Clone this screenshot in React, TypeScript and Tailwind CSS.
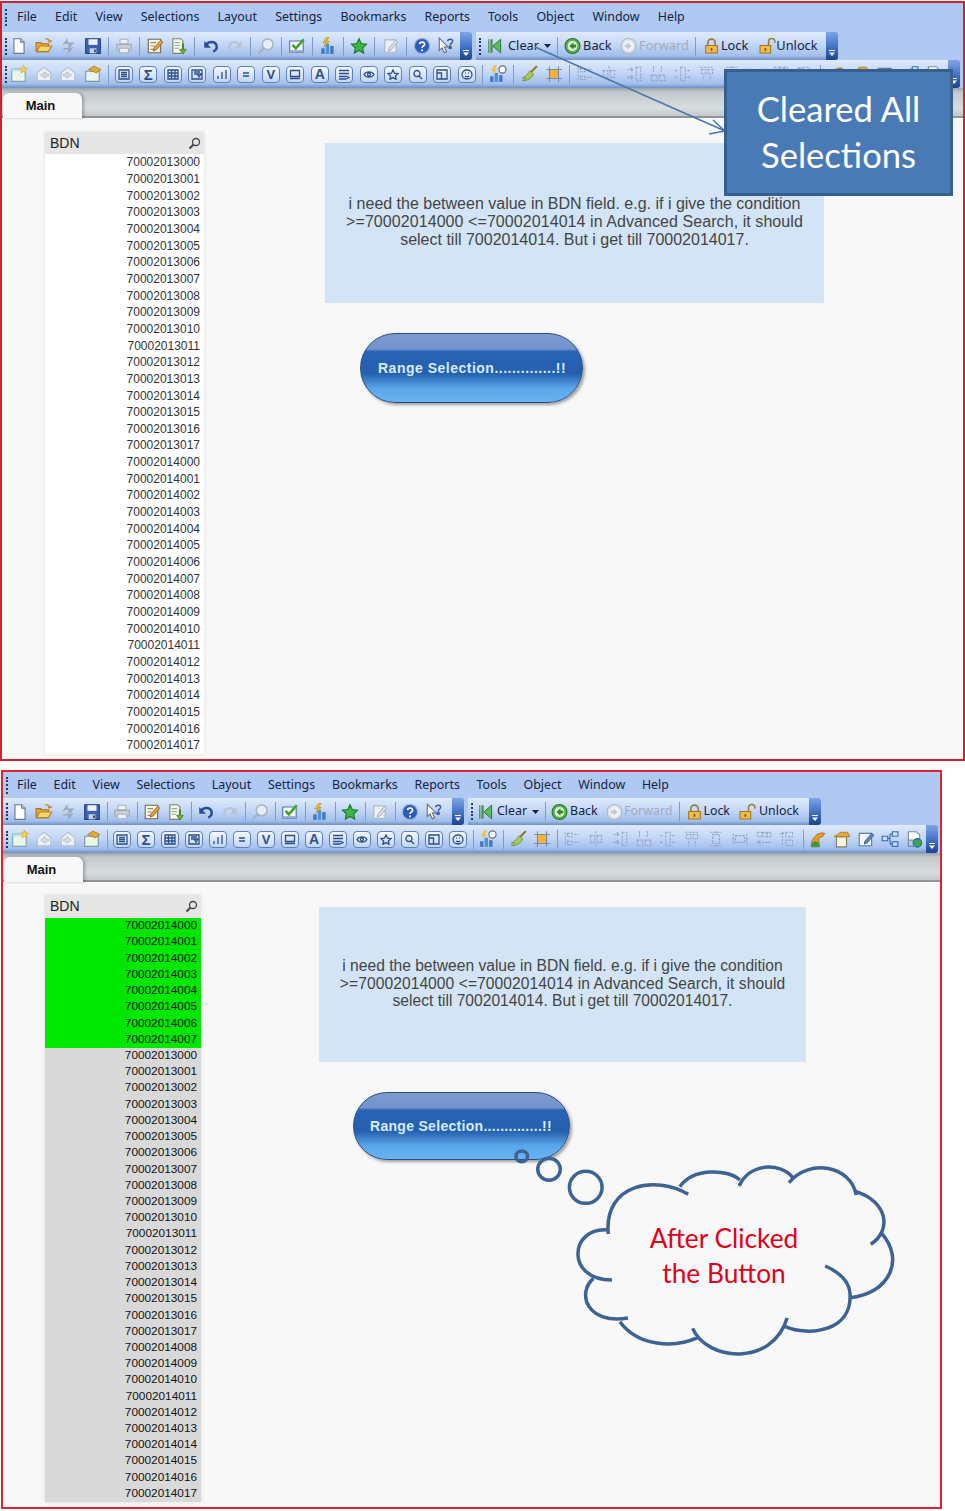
import React from "react";

const ui = "font-['Noto_Sans',sans-serif]";
const arial = "font-['Liberation_Sans',sans-serif]";

const top13 = [0, 1, 2, 3, 4, 5, 6, 7, 8, 9, 10, 11, 12, 13, 14, 15, 16, 17].map(
  (n) => "700020130" + String(n).padStart(2, "0")
);
const top14 = [0, 1, 2, 3, 4, 5, 6, 7, 8, 9, 10, 11, 12, 13, 14, 15, 16, 17].map(
  (n) => "700020140" + String(n).padStart(2, "0")
);

const S = ({ children }: { children: React.ReactNode }) => (
  <svg width="18" height="18" viewBox="0 0 16 16" fill="none">
    {children}
  </svg>
);

const Box = ({ children }: { children: React.ReactNode }) => (
  <div className="flex h-[17px] w-[18px] items-center justify-center rounded-[4px] border border-[#5f80b5] bg-[linear-gradient(#f4f8fe,#c3d5f2)] text-[#2d4f8a]">
    {children}
  </div>
);

const lines = (d: string) => (
  <Box>
    <svg width="12" height="11" viewBox="0 0 12 11" fill="none" stroke="currentColor" strokeWidth="1.3">
      <path d={d} />
    </svg>
  </Box>
);

const alignPaths = [
  "M2 2v12M4 3h4v3H4zM4 10h4v3H4zM10 4h4M10 11h4",
  "M8 1v3M8 12v3M3 5h4v6H3zM9 5h4v6H9z",
  "M10 2h4v12h-4zM2 4h5M2 11h5M5 2l2 2-2 2M5 9l2 2-2 2",
  "M4 1v6M11 1v6M2 9h5v5H2zM9 9h5v5H9z",
  "M6 2h4v12H6zM1 5h3M12 5h3M1 11h3M12 11h3",
  "M2 2h12M3 4h4v4H3zM9 4h4v4H9zM5 10v4M11 10v4",
  "M3 2h10M3 14h10M5 4h6v8H5zM8 1v2M8 13v2",
  "M2 3v10M14 3v10M4 5h8v6H4zM1 8h2M13 8h2",
  "M2 2h4v4H2zM7 2h3v4H7zM11 2h3v4h-3zM14 11H2M5 9l-3 2 3 2",
  "M6 2h6v4H6zM6 9h6v5H6zM3 2v12M1 4l2-2 2 2",
];

const icons: Record<string, React.ReactNode> = {
  new: <S><path d="M3.5 1.5h6l3 3v10h-9z" fill="#fff" stroke="#68798f" /><path d="M9.5 1.5v3h3" fill="#dfe6ef" stroke="#68798f" /></S>,
  open: <S><path d="M1 13V5h4l1 1h6v7z" fill="#e6a93a" stroke="#a8741a" /><path d="M1.5 13l2.5-5h11l-3 5z" fill="#f7d36f" stroke="#b58226" /><path d="M9 1.5c2.500 0 4 1 4.500 3M13.500 4.500l1.500-1.500M13.500 4.500l-2-.8" stroke="#c98a1c" strokeWidth="1.2" /></S>,
  refresh: <S><path d="M4 7l3-4v2.500h5L9 9V6.500M12 9l-3 4v-2.500H4" stroke="#9aa6b6" strokeWidth="1.4" /></S>,
  save: <S><path d="M1.500 1.500h13v13h-13z" fill="#3e62b0" stroke="#23407f" /><path d="M4 2h8v5H4z" fill="#eef3fb" /><path d="M5 10h6v4.500H5z" fill="#c8d2e0" /><path d="M9 11h1.500v2.500H9z" fill="#23407f" /></S>,
  print: <S><path d="M4.500 2h7v4h-7z" fill="#f0f2f5" stroke="#aab3bf" /><path d="M1.500 6.500h13v5h-13z" fill="#c9ced6" stroke="#a0a9b5" /><path d="M4 10h8v4H4z" fill="#eef0f3" stroke="#aab3bf" /></S>,
  edit: <S><path d="M2 2h11v12H2z" fill="#fbf6e3" stroke="#6f6a58" /><path d="M4 5h5M4 8h4M4 11h5" stroke="#8e8a78" /><path d="M7 10l6-7 2 1.500-6 7-2.500 1z" fill="#e8a33c" stroke="#a35b1f" strokeWidth=".8" /></S>,
  export: <S><path d="M2.500 1.500h7l2 2v11h-9z" fill="#f5f5ee" stroke="#7c8470" /><path d="M4 5h5M4 7.500h5M4 10h4" stroke="#a2a896" /><path d="M12 6v5h2.500L11.500 15l-3-4H11V6z" fill="#6ab52e" stroke="#3f7a17" strokeWidth=".7" /></S>,
  undo: <S><path d="M4 7c1-3 8-4 9 1 .4 2-1 4-3 5" stroke="#2a4f9a" strokeWidth="2.200" /><path d="M2 3.500v6h6z" fill="#2a4f9a" /></S>,
  redo: <S><path d="M12 7C11 4 4 3 3 8c-.4 2 1 4 3 5" stroke="#b9c4d6" strokeWidth="2" /><path d="M14 3.500v6H8z" fill="#b9c4d6" /></S>,
  search: <S><circle cx="9.500" cy="6.500" r="4.800" fill="#e8edf4" stroke="#a7b1bf" strokeWidth="1.300" /><path d="M6 10l-4.500 4.500" stroke="#a7b1bf" strokeWidth="2.200" /></S>,
  check: <S><path d="M1.500 3.500h12v10h-12z" fill="#f7f8fb" stroke="#5574a6" /><path d="M1.500 11.500h12v2h-12z" fill="#9cb1d4" /><path d="M4 7l3 3 7-8" stroke="#3ea52a" strokeWidth="2.300" /></S>,
  chart: <S><path d="M2 10h3v5H2z" fill="#3f79c4" /><path d="M6 6h3v9H6z" fill="#4f8fd8" /><path d="M10 8h3v7h-3z" fill="#3f79c4" /><path d="M7 0L3.500 5H6L4.500 9 9 4H6.500L9 0z" fill="#efc21d" stroke="#a97d0d" strokeWidth=".5" /></S>,
  star: <S><path d="M8 1.500l2 4.300 4.700.6-3.400 3.200.9 4.700L8 11.900l-4.200 2.400.9-4.700L1.300 6.400 6 5.800z" fill="#3cb54a" stroke="#1f7a2a" /></S>,
  editoff: <S><path d="M2.500 2.500h10v11h-10z" fill="#eef1f5" stroke="#aeb8c5" /><path d="M6 10l6-7 2 1.500-6 7-2.500 1z" fill="#d8dee7" stroke="#a2adbc" strokeWidth=".8" /></S>,
  help: <S><circle cx="8" cy="8" r="6.800" fill="#2c5cb8" stroke="#9db6e2" /><path d="M5.800 6.300c.3-2.500 4.700-2.300 4.500.2-.1 1.600-2.300 1.600-2.300 3.200" stroke="#fff" strokeWidth="1.500" /><path d="M7.200 11h1.600v1.600H7.200z" fill="#fff" /></S>,
  what: <S><path d="M2 1v11l2.500-2.300L6.500 14l2-.9-2-4.200h3.300z" fill="#fff" stroke="#59677c" strokeWidth=".9" /><path d="M9.500 3.800c.2-2.500 4.400-2.500 4.400 0 0 1.700-2.200 1.700-2.200 3.500M11 8.500h1.400v1.500H11z" stroke="#3c5b96" strokeWidth="1.300" /></S>,
  sheet: <S><path d="M1.500 3.500h12v11h-12z" fill="#e9f6e8" stroke="#7ea5ae" /><path d="M1.500 3.500h12v2h-12z" fill="#b8d9ef" /><path d="M12 0l1 2.500 2.500.4-1.800 1.700.5 2.400-2.200-1.200-2.200 1.200.5-2.400L8.500 2.900 11 2.500z" fill="#f4d34c" stroke="#c89d1e" strokeWidth=".5" /></S>,
  prev: <S><path d="M2 7l6-5 6 5v7H2z" fill="#eef1f6" stroke="#b5bfcc" /><path d="M9 6L5 9l4 3V10h3V8H9z" fill="#d5dce6" stroke="#aeb8c5" strokeWidth=".7" /></S>,
  next: <S><path d="M2 7l6-5 6 5v7H2z" fill="#eef1f6" stroke="#b5bfcc" /><path d="M7 6l4 3-4 3V10H4V8h3z" fill="#d5dce6" stroke="#aeb8c5" strokeWidth=".7" /></S>,
  props: <S><path d="M1.500 5.500h12v9h-12z" fill="#eaf5ea" stroke="#7b9aa0" /><path d="M4 4l5-3 6 3-4 3z" fill="#e4a93b" stroke="#aa7417" strokeWidth=".7" /></S>,
  list: lines("M1 1h10v9H1zM3 3.500h6M3 5.500h6M3 7.500h6"),
  sum: <Box><span className={`${arial} text-[15px] leading-none font-bold`}>Σ</span></Box>,
  table: lines("M1 1h10v9H1zM1 4h10M1 7h10M4.500 1v9M8 1v9"),
  filter: lines("M1 1h10v9H1zM3 3h6M3 5h3M6 5l2 3 2-3z"),
  bars: lines("M2 10V7M6 10V3M10 10V1"),
  equal: lines("M3 4h6M3 7h6"),
  vee: <Box><span className={`${arial} text-[13px] leading-none font-bold`}>V</span></Box>,
  rect: lines("M1.500 1.500h9v6h-9zM1 9.500h10"),
  letter: <Box><span className={`${arial} text-[14px] leading-none font-bold`}>A</span></Box>,
  linesbox: lines("M1 1.500h10M1 4.500h10M1 7.500h7M1 10h7M8 7l3 1.500-3 1.500"),
  eye: lines("M1 5.500C3 2 9 2 11 5.500 9 9 3 9 1 5.500zM4.500 5.500a1.500 1.500 0 103 0 1.500 1.500 0 00-3 0"),
  starbox: lines("M6 1l1.500 3.200 3.500.4-2.600 2.300.7 3.400L6 8.600 2.900 10.300l.7-3.400L1 4.600l3.500-.4z"),
  find: lines("M2 4.500a3 3 0 106 0 3 3 0 00-6 0M7 7l3 3"),
  panel: lines("M1 1h10v9H1zM1 4h4.500v6"),
  smile: lines("M1 5.500a5 4.500 0 1010 0 5 4.500 0 00-10 0M4 7c1 1 3 1 4 0M4 4h.8M7.200 4H8"),
  chartclock: <S><path d="M1 10h3v5H1z" fill="#3f79c4" /><path d="M5 7h3v8H5z" fill="#4f8fd8" /><path d="M9 9h3v6H9z" fill="#3f79c4" /><path d="M5 0L2 5h2L3 8l4-4H5l2-4z" fill="#efc21d" /><circle cx="12" cy="4" r="3.200" fill="#fff" stroke="#5a6b82" /></S>,
  broom: <S><path d="M15 1L9 7" stroke="#8a6a2c" strokeWidth="1.800" /><path d="M9 5l3 3c-1 4-6 6-10 6 3-1 3-3 3-3-1 .5-2 .8-3 .8C6 10 7 7 9 5z" fill="#a8c94f" stroke="#6c8a2a" strokeWidth=".7" /></S>,
  crop: <S><path d="M4 4h8v8H4z" fill="#f2b13c" stroke="#c17d14" /><path d="M1 4h14M1 12h14M4 1v14M12 1v14" stroke="#7b8aa3" strokeWidth=".9" /></S>,
  user: <S><path d="M2 15c0-4 1-7 4-10 2-2 5-3 8-2l-2 3c-2 0-3 1-3.500 3l1 6z" fill="#e69a2a" stroke="#a4620f" strokeWidth=".7" /><path d="M2 15c0-3 2-5 4-5s3 2 3 5z" fill="#3d9a3c" /></S>,
  doc: <S><path d="M3 6h9v9H3z" fill="#f7f3df" stroke="#77806b" /><path d="M1 6l6-4h6l2 4z" fill="#e4a93b" stroke="#aa7417" strokeWidth=".7" /></S>,
  note: <S><path d="M2 3h11v11H2z" fill="#f4f7fb" stroke="#617a9d" /><path d="M7 10l6-7 2 1.500-6 7-2.500 1z" fill="#5f86c2" stroke="#2d4f8a" strokeWidth=".7" /></S>,
  flow: <S><path d="M1 5.500h5v4H1zM10 1.500h5v4h-5zM10 10.500h5v4h-5z" fill="#cfe0f6" stroke="#3b69ab" /><path d="M6 7.500h2M8 3.500v9M8 3.500h2M8 12.500h2" stroke="#3b69ab" /></S>,
  globe: <S><path d="M3 1.500h7l3 3V9H3z" fill="#fff" stroke="#7c8aa0" /><path d="M3 9v5.500h5" stroke="#7c8aa0" /><circle cx="11" cy="11.500" r="3.800" fill="#3fa15c" stroke="#256d8a" /></S>,
  clear: <S><path d="M4 2h1.800v12H4zM2 2h1v12H2z" fill="#3a8a3f" /><path d="M13 2v12L6 8z" fill="#5dba5d" stroke="#256e2a" strokeWidth=".8" /></S>,
  back: <S><circle cx="8" cy="8" r="7" fill="#55b54a" stroke="#2a6f25" /><circle cx="8" cy="8" r="4.600" fill="#eaf7e4" /><path d="M9 4.500L5 8l4 3.500V9.300h2.500V6.700H9z" fill="#2e8a2a" /></S>,
  forward: <S><circle cx="8" cy="8" r="7" fill="#dfe4ea" stroke="#adb6c2" /><circle cx="8" cy="8" r="4.600" fill="#f3f5f8" /><path d="M7 4.500L11 8l-4 3.500V9.300H4.500V6.700H7z" fill="#c1c9d4" /></S>,
  lock: <S><path d="M4.500 8V5a3.500 3.500 0 017 0v3" stroke="#9c7a3a" strokeWidth="1.500" /><path d="M2.500 7.500h11v7h-11z" fill="#eebc4a" stroke="#a5741c" /><path d="M7.200 10h1.600v2.500H7.200z" fill="#7b5510" /></S>,
  unlock: <S><path d="M9 7V4a3 3 0 016 0v1" stroke="#9c7a3a" strokeWidth="1.400" /><path d="M1 7.500h10v7H1z" fill="#eebc4a" stroke="#a5741c" /><path d="M5.200 10h1.600v2.500H5.200z" fill="#7b5510" /></S>,
};

const row1 = ["new", "open", "refresh", "save", "|", "print", "|", "edit", "export", "|", "undo", "redo", "|", "search", "|", "check", "|", "chart", "|", "star", "|", "editoff", "|", "help", "what"];
const row2 = ["sheet", "prev", "next", "props", "|", "list", "sum", "table", "filter", "bars", "equal", "vee", "rect", "letter", "linesbox", "eye", "starbox", "find", "panel", "smile", "|", "chartclock", "|", "broom", "crop", "|", "a0", "a1", "a2", "a3", "a4", "a5", "a6", "a7", "a8", "a9", "|", "user", "doc", "note", "flow", "globe"];

const Grip = () => (
  <div className="ml-[3px] flex h-[17px] w-[3px] shrink-0 flex-col justify-between">
    <i className="block h-[2px] w-[2px] bg-[#26395f]" />
    <i className="block h-[2px] w-[2px] bg-[#26395f]" />
    <i className="block h-[2px] w-[2px] bg-[#26395f]" />
    <i className="block h-[2px] w-[2px] bg-[#26395f]" />
    <i className="block h-[2px] w-[2px] bg-[#26395f]" />
  </div>
);

const Sep = ({ className = "" }: { className?: string }) => (
  <div className={`flex h-full shrink-0 items-center justify-center ${className}`}>
    <i className="block h-[19px] w-px bg-[#7f9bc6]" />
  </div>
);

const Tool = ({ name, cell }: { name: string; cell: string }) => {
  if (/^a\d$/.test(name)) {
    return (
      <div className={`flex shrink-0 items-center justify-center ${cell}`}>
        <svg width="18" height="18" viewBox="0 0 16 16" fill="none" stroke="#8fa2bf" strokeWidth=".9" strokeDasharray="2 1">
          <path d={alignPaths[Number(name[1])]} />
        </svg>
      </div>
    );
  }
  return <div className={`flex shrink-0 items-center justify-center ${cell}`}>{icons[name]}</div>;
};

const Overflow = ({ className = "" }: { className?: string }) => (
  <div className={`flex h-full shrink-0 items-end justify-center rounded-r-[3px] bg-[linear-gradient(#7ea5e6,#3f6fc4_55%,#1c438f)] pb-[3px] ${className}`}>
    <svg width="8" height="8" viewBox="0 0 8 8" fill="#fff">
      <path d="M1 1h6v1H1zM1 3.500h6L4 7z" />
    </svg>
  </div>
);

const barBg = "bg-[linear-gradient(#dfeafc,#c4d7f6_45%,#a2bfec_85%,#6f8fc4)]";

const Window = ({ large }: { large: boolean }) => {
  const cell = large ? "w-[24.5px]" : "w-[24px]";
  const sep = large ? "w-[6.6px]" : "w-[6px]";
  const menu = ["File", "Edit", "View", "Selections", "Layout", "Settings", "Bookmarks", "Reports", "Tools", "Object", "Window", "Help"];
  const rows = large ? [...top13, ...top14] : [...top14.slice(0, 8), ...top13, ...top14.slice(8)];

  return (
    <div
      className={
        large
          ? "flex h-[760px] w-[965px] shrink-0 flex-col border-2 border-[#d0222c] bg-[#f8f8f8]"
          : "flex h-[739px] w-[941px] shrink-0 flex-col border-2 border-[#e0222e] bg-[#f8f8f8]"
      }
    >
      <div className={`flex shrink-0 items-center bg-[#afc9f3] text-[12.400px] text-[#14233f] ${ui} ${large ? "h-[29px]" : "h-[26px]"}`}>
        <Grip />
        <div className={`flex items-center ${large ? "gap-[18.200px] pl-[9px]" : "gap-[16.750px] pl-[8px]"}`}>
          {menu.map((m) => (
            <span key={m}>{m}</span>
          ))}
        </div>
      </div>

      <div className={`flex shrink-0 bg-[#afc9f3] ${large ? "h-[28px]" : "h-[27px]"}`}>
        <div className={`flex h-full items-center ${barBg} ${large ? "w-[458px]" : "w-[449px]"}`}>
          <Grip />
          <div className="ml-[-1px]" />
          {row1.map((n, i) =>
            n === "|" ? <Sep key={i} className={sep} /> : <Tool key={i} name={n} cell={cell} />
          )}
        </div>
        <Overflow className="w-[12px]" />
        <div className={`ml-[4px] flex h-full items-center text-[#14233f] ${barBg} ${ui} ${large ? "w-[350px] text-[12.800px]" : "w-[341px] text-[12.400px]"}`}>
          <Grip />
          <div className={`flex shrink-0 justify-center ${large ? "w-[26px]" : "w-[23px]"}`}>{icons.clear}</div>
          <span>Clear</span>
          <svg className={large ? "ml-[5px]" : "ml-[5px]"} width="7" height="4" viewBox="0 0 7 4" fill="#14233f">
            <path d="M0 0h7L3.500 4z" />
          </svg>
          <Sep className={large ? "w-[13px]" : "w-[12px]"} />
          <div className="flex w-[17px] shrink-0 justify-center">{icons.back}</div>
          <span className="ml-[2px]">Back</span>
          <div className="ml-[8px] flex w-[17px] shrink-0 justify-center">{icons.forward}</div>
          <span className={`text-[#9fabbc] ${large ? "ml-[2.500px]" : "ml-[1.500px]"}`}>Forward</span>
          <Sep className="w-[14px]" />
          <div className="flex w-[17px] shrink-0 justify-center">{icons.lock}</div>
          <span className={large ? "ml-[1px]" : "ml-0"}>Lock</span>
          <div className={`flex w-[17px] shrink-0 justify-center ${large ? "ml-[11px]" : "ml-[9px]"}`}>{icons.unlock}</div>
          <span className={large ? "ml-0" : "ml-[3px]"}>Unlock</span>
        </div>
        <Overflow className="w-[12px]" />
      </div>

      <div className="flex h-[28px] shrink-0 bg-[#afc9f3]">
        <div className={`flex h-full items-center ${barBg} ${large ? "w-[946px]" : "w-[923px]"}`}>
          <Grip />
          <div className="ml-[-1px]" />
          {row2.map((n, i) =>
            n === "|" ? <Sep key={i} className={sep} /> : <Tool key={i} name={n} cell={cell} />
          )}
        </div>
        <Overflow className="w-[12px]" />
      </div>

      <div className={`flex shrink-0 items-end border-b-2 border-[#8f9598] bg-[linear-gradient(#9aa3a8,#c2c9cc_15%,#d7dcde_70%,#c5cacc)] ${large ? "h-[30px]" : "h-[29px]"}`}>
        <div className={`mb-[-2px] ml-px flex h-[25px] w-[79px] items-center justify-center rounded-t-[6px] bg-[#f8f8f8] pr-[4px] text-[13px] font-bold text-[#111] shadow-[2px_0_3px_rgba(0,0,0,0.25)] ${arial}`}>
          Main
        </div>
      </div>

      <div className={`flex min-h-0 flex-1 items-start ${large ? "pl-[43px] pt-[14px]" : "pl-[42px] pt-[13px]"}`}>
        <div className={`shrink-0 shadow-[0_0_4px_rgba(0,0,0,0.1)] ${large ? "w-[159px]" : "w-[156px]"}`}>
          <div className={`flex items-center justify-between bg-[#e6e6e6] pl-[5px] pr-[3px] text-[14px] text-[#222] ${arial} ${large ? "h-[22px]" : "h-[23px]"}`}>
            <span>BDN</span>
            <svg width="13" height="13" viewBox="0 0 13 13" fill="none" stroke="#444" strokeWidth="1.300">
              <circle cx="8" cy="5" r="3.500" />
              <path d="M5.500 7.500L1.500 11.500" strokeWidth="2" />
            </svg>
          </div>
          {rows.map((r, i) => (
            <div
              key={r}
              className={`flex items-center justify-end pr-[4px] ${arial} ${
                large
                  ? "h-[16.660px] bg-white text-[12px] text-[#333]"
                  : `h-[16.230px] text-[11.800px] text-[#111] ${i < 8 ? "bg-[#00e800]" : "bg-[#d9d9d9]"}`
              }`}
            >
              {r}
            </div>
          ))}
        </div>

        <div className={`flex flex-col items-start ${large ? "ml-[121px] mt-[11px]" : "ml-[118px] mt-[12px]"}`}>
          <div
            className={`flex flex-col items-center justify-center bg-[#d3e4f7] pb-[2px] text-center text-[#444] ${arial} ${
              large ? "h-[160px] w-[499px] text-[16px] leading-[18px]" : "h-[155px] w-[487px] text-[15.600px] leading-[17.500px]"
            }`}
          >
            <p>i need the between value in BDN field. e.g. if i give the condition</p>
            <p className="tracking-[0.07px]">&gt;=70002014000 &lt;=70002014014 in Advanced Search, it should</p>
            <p>select till 7002014014. But i get till 70002014017.</p>
          </div>
          <div
            className={`mt-[30px] flex items-center rounded-full border border-[#2b4d82] bg-[linear-gradient(#7a9ad0,#7394cb_22%,#2a62b6_26%,#2560ae_58%,#5aa6ea_80%,#6ab4f2)] text-[14px] font-bold text-[#d8ebff] shadow-[2px_2px_3px_rgba(0,0,0,0.35)] ${arial} ${
              large ? "ml-[35px] h-[70px] w-[223px] pl-[17px] tracking-[0.5px]" : "ml-[34px] h-[68px] w-[217px] pl-[16px] tracking-[0.3px]"
            }`}
          >
            Range Selection..............!!
          </div>
        </div>
      </div>
    </div>
  );
};

export default function App() {
  return (
    <div className="relative flex h-[1511px] w-[965px] flex-col items-start gap-[9px] overflow-hidden bg-white pt-px">
      <Window large />
      <div className="pl-px">
        <Window large={false} />
      </div>

      <svg className="absolute left-0 top-0" width="965" height="200" viewBox="0 0 965 200" fill="none" stroke="#4a76ad" strokeWidth="1.500">
        <path d="M535 47L725 131M709 134L725 131L713 120" />
      </svg>
      <div className="absolute left-[724px] top-[69px] flex h-[127px] w-[229px] flex-col items-center justify-center border-[3px] border-[#36608f] bg-[#4a7ab5] pb-[1px] font-['Lato',sans-serif] text-[34.600px] leading-[46px] text-white">
        <span>Cleared All</span>
        <span>Selections</span>
      </div>

      <svg className="absolute left-[340px] top-[1080px]" width="570" height="290" viewBox="0 0 1568 870" preserveAspectRatio="none" fill="none" stroke="#3c6393" strokeWidth="3.500">
        <ellipse cx="500" cy="229" rx="16" ry="16" vectorEffect="non-scaling-stroke" />
        <ellipse cx="575" cy="268" rx="31" ry="33" vectorEffect="non-scaling-stroke" />
        <ellipse cx="676" cy="322" rx="45" ry="48" vectorEffect="non-scaling-stroke" />
        <path
          vectorEffect="non-scaling-stroke"
          d="M958 343C870 285 725 310 738 462M738 450C630 440 620 600 748 600M697 595C650 640 680 735 792 714M770 725C820 800 920 805 985 772M970 745C1010 845 1190 860 1230 714M1225 740C1290 770 1410 755 1403 640C1400 600 1370 575 1335 558M1405 653C1510 640 1555 540 1490 460M1460 493C1520 450 1505 365 1420 335M1420 345C1405 255 1290 235 1235 308M1245 292C1210 245 1125 250 1098 318M1100 300C1065 265 970 265 935 320"
        />
      </svg>
      <div className="absolute left-[620px] top-[1221px] flex w-[208px] flex-col items-center font-['Lato',sans-serif] text-[26.300px] leading-[35px] text-[#e2001a]">
        <span>After Clicked</span>
        <span>the Button</span>
      </div>
    </div>
  );
}
